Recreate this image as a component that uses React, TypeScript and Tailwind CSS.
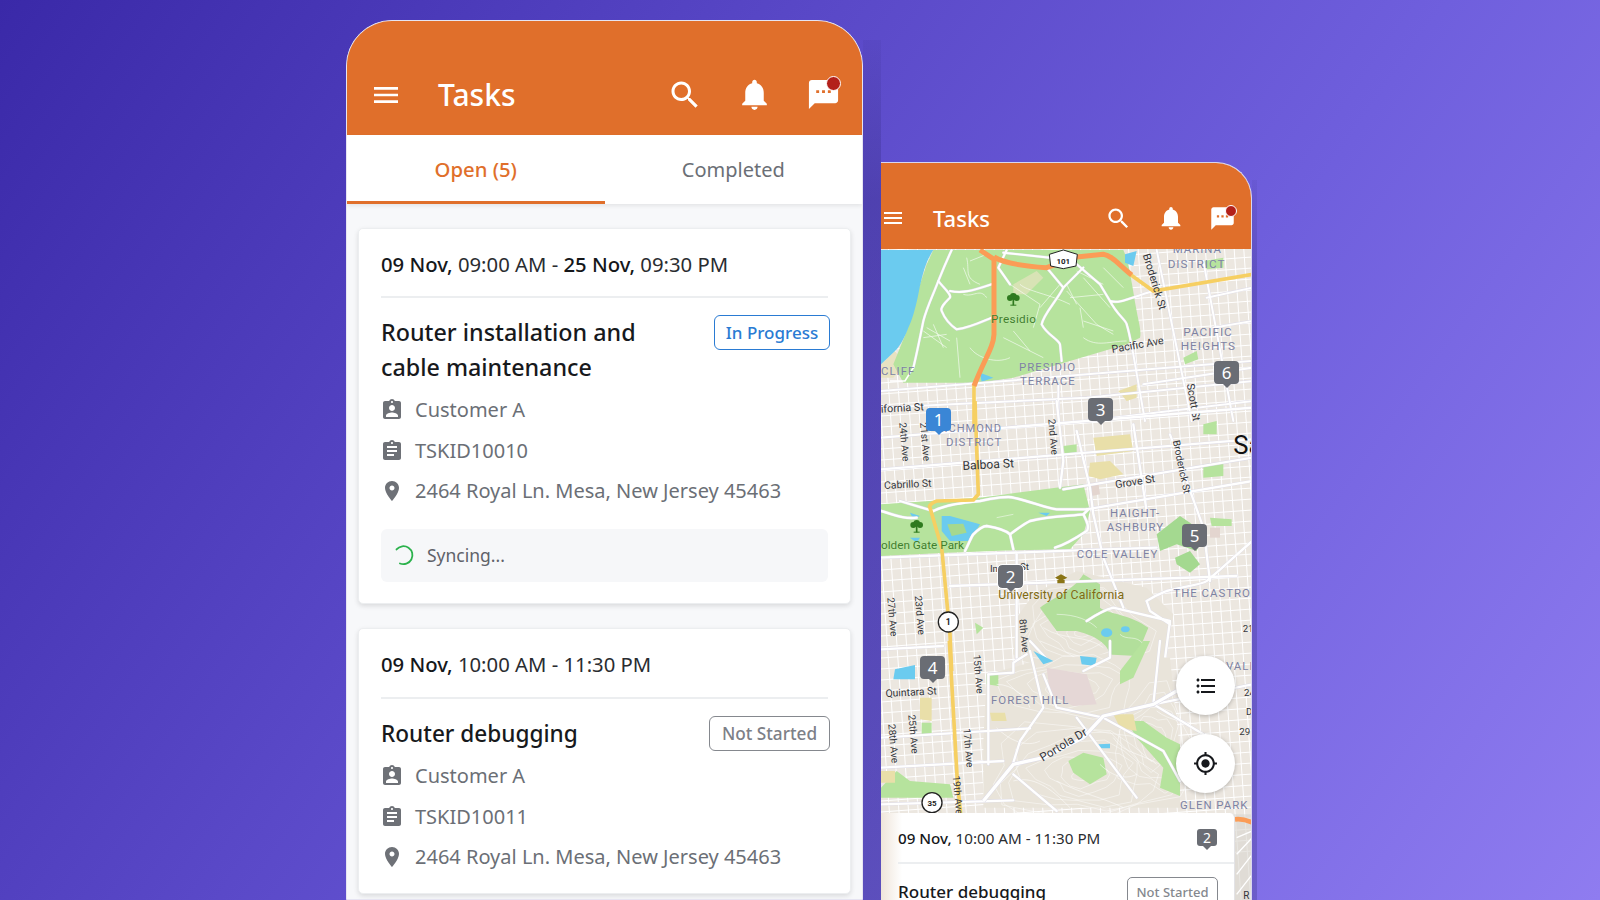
import React from "react";

const P = {
  menu: "M3 18h18v-2H3v2zm0-5h18v-2H3v2zm0-7v2h18V6H3z",
  search: "M15.5 14h-.79l-.28-.27C15.41 12.59 16 11.11 16 9.5 16 5.91 13.09 3 9.5 3S3 5.91 3 9.5 5.91 16 9.5 16c1.61 0 3.09-.59 4.23-1.57l.27.28v.79l5 4.99L20.49 19l-4.99-5zm-6 0C7.01 14 5 11.99 5 9.5S7.01 5 9.5 5 14 7.01 14 9.5 11.99 14 9.5 14z",
  bell: "M12 22c1.1 0 2-.9 2-2h-4c0 1.1.89 2 2 2zm6-6v-5c0-3.07-1.64-5.64-4.5-6.32V4c0-.83-.67-1.5-1.5-1.5s-1.5.67-1.5 1.5v.68C7.63 5.36 6 7.92 6 11v5l-2 2v1h16v-1l-2-2z",
  sms: "M20 2H4c-1.1 0-1.99.9-1.99 2L2 22l4-4h14c1.1 0 2-.9 2-2V4c0-1.1-.9-2-2-2zM9 11H7V9h2v2zm4 0h-2V9h2v2zm4 0h-2V9h2v2z",
  ind: "M19 3h-4.18C14.4 1.84 13.3 1 12 1c-1.3 0-2.4.84-2.82 2H5c-1.1 0-2 .9-2 2v14c0 1.1.9 2 2 2h14c1.1 0 2-.9 2-2V5c0-1.1-.9-2-2-2zm-7 0c.55 0 1 .45 1 1s-.45 1-1 1-1-.45-1-1 .45-1 1-1zm0 4c1.66 0 3 1.34 3 3s-1.34 3-3 3-3-1.34-3-3 1.34-3 3-3zm6 12H6v-1.4c0-2 4-3.1 6-3.1s6 1.1 6 3.1V19z",
  task: "M19 3h-4.18C14.4 1.84 13.3 1 12 1c-1.3 0-2.4.84-2.82 2H5c-1.1 0-2 .9-2 2v14c0 1.1.9 2 2 2h14c1.1 0 2-.9 2-2V5c0-1.1-.9-2-2-2zm-7 0c.55 0 1 .45 1 1s-.45 1-1 1-1-.45-1-1 .45-1 1-1zm2 14H7v-2h7v2zm3-4H7v-2h10v2zm0-4H7V7h10v2z",
  place: "M12 2C8.13 2 5 5.13 5 9c0 5.25 7 13 7 13s7-7.75 7-13c0-3.87-3.13-7-7-7zm0 9.5c-1.38 0-2.5-1.12-2.5-2.5s1.12-2.5 2.5-2.5 2.5 1.12 2.5 2.5-1.12 2.5-2.5 2.5z",
  loc: "M12 8c-2.21 0-4 1.79-4 4s1.79 4 4 4 4-1.79 4-4-1.79-4-4-4zm8.94 3c-.46-4.17-3.77-7.48-7.94-7.94V1h-2v2.06C6.83 3.52 3.52 6.83 3.06 11H1v2h2.06c.46 4.17 3.77 7.48 7.94 7.94V23h2v-2.06c4.17-.46 7.48-3.77 7.94-7.94H23v-2h-2.06zM12 19c-3.87 0-7-3.13-7-7s3.13-7 7-7 7 3.13 7 7-3.13 7-7 7z",
  list: "M4 10.5c-.83 0-1.5.67-1.5 1.5s.67 1.5 1.5 1.5 1.5-.67 1.5-1.5-.67-1.5-1.5-1.5zm0-6c-.83 0-1.5.67-1.5 1.5S3.17 7.5 4 7.5 5.5 6.83 5.5 6 4.83 4.5 4 4.5zm0 12c-.83 0-1.5.68-1.5 1.5s.68 1.5 1.5 1.5 1.5-.68 1.5-1.5-.67-1.5-1.5-1.5zM7 19h14v-2H7v2zm0-6h14v-2H7v2zm0-8v2h14V5H7z",
};

function Ic({ d, size, color }: { d: string; size: number; color: string }) {
  return (
    <svg width={size} height={size} viewBox="0 0 24 24" fill={color} className="shrink-0">
      <path d={d} />
    </svg>
  );
}

function Chat({ size, dot, ring }: { size: number; dot: string; ring: string }) {
  return (
    <div className="relative shrink-0" style={{ width: size, height: size }}>
      <Ic d={P.sms} size={size} color="#fff" />
      <span className={`absolute rounded-full bg-[#b3201a] border-white ${dot} ${ring}`} />
    </div>
  );
}

function Row({ d, text }: { d: string; text: string }) {
  return (
    <div className="flex items-center h-[40.6px]">
      <div className="ml-[-1px]">
        <Ic d={d} size={24} color="#6e7177" />
      </div>
      <span className="ml-[11px] text-[20px] text-[#6b6f76]">{text}</span>
    </div>
  );
}

function Badge({ label, cls }: { label: string; cls: string }) {
  return (
    <span className={`shrink-0 flex items-center justify-center h-[35px] rounded-[6px] border-[1.5px] font-medium ${cls}`}>
      {label}
    </span>
  );
}

type L = [string, number, number, number, number?, string?, number?];
const LB = "#7d82a3";
const DK = "#33353a";

const labels4: L[] = [
  ["MARINA", 908, 306, 32, 0, LB, 3],
  ["DISTRICT", 893, 350, 33, 0, LB, 3],
  ["Presidio", 363, 515, 34, 0, "#3f7f2c", 1],
  ["Pacific Ave", 727, 606, 31, -10, DK, 0],
  ["Broderick St", 818, 312, 31, 73, DK, 0],
  ["PACIFIC", 940, 555, 33, 0, LB, 3],
  ["HEIGHTS", 932, 597, 33, 0, LB, 3],
  ["PRESIDIO", 447, 660, 32, 0, LB, 3],
  ["TERRACE", 450, 703, 32, 0, LB, 3],
  ["CLIFF", 33, 672, 32, 0, LB, 3],
  ["ifornia St", 33, 785, 31, -3, DK, 0],
  ["Scott St", 950, 700, 31, 80, DK, 0],
];
const labels5: L[] = [
  ["RICHMOND", 200, 92, 31, 0, LB, 3],
  ["DISTRICT", 228, 135, 32, 0, LB, 3],
  ["Balboa St", 278, 207, 35, -3, DK, 0],
  ["Cabrillo St", 43, 264, 30, -3, DK, 0],
  ["24th Ave", 88, 65, 29, 85, DK, 0],
  ["21st Ave", 150, 65, 29, 85, DK, 0],
  ["2nd Ave", 535, 55, 29, 85, DK, 0],
  ["Broderick St", 908, 120, 29, 78, DK, 0],
  ["Grove St", 737, 262, 31, -9, DK, 0],
  ["HAIGHT-", 720, 347, 32, 0, LB, 3],
  ["ASHBURY", 710, 390, 32, 0, LB, 3],
  ["COLE VALLEY", 620, 470, 32, 0, LB, 3],
  ["THE CASTRO", 910, 587, 32, 0, LB, 3],
  ["olden Gate Park", 33, 445, 34, 0, "#3f7f2c", 0],
  ["In", 360, 512, 28, 0, DK, 0],
  ["St", 450, 506, 28, 0, DK, 0],
  ["University of California", 385, 595, 35.5, 0, "#7f6a12", 0.3],
  ["27th Ave", 52, 590, 29, 85, DK, 0],
  ["23rd Ave", 134, 585, 29, 85, DK, 0],
  ["8th Ave", 448, 655, 29, 85, DK, 0],
  ["21", 1118, 692, 28, 0, DK, 0],
  ["Sa", 1090, 160, 74, 0, "#111", 0],
];
const labels6: L[] = [
  ["15th Ave", 310, 42, 29, 85, DK, 0],
  ["Quintara St", 47, 168, 30, -3, DK, 0],
  ["FOREST HILL", 363, 190, 32, 0, LB, 3],
  ["25th Ave", 115, 222, 29, 85, DK, 0],
  ["28th Ave", 55, 250, 29, 85, DK, 0],
  ["17th Ave", 280, 263, 29, 85, DK, 0],
  ["19th Ave", 248, 405, 29, 85, DK, 0],
  ["Portola Dr", 518, 362, 34, -31, DK, 0],
  ["GLEN PARK", 930, 503, 32, 0, LB, 3],
  ["VALL", 1068, 88, 32, 0, LB, 3],
  ["24", 1122, 165, 28, 0, DK, 0],
  ["D", 1128, 222, 28, 0, DK, 0],
  ["29", 1108, 282, 28, 0, DK, 0],
];

function Labels({ items }: { items: L[] }) {
  return (
    <>
      {items.map(([t, x, y, fs, r, c, ls]) => (
        <text
          key={t + x}
          x={x}
          y={y}
          fontSize={fs * (c === LB ? 1.07 : 1.04)}
          fill={c || DK}
          letterSpacing={ls || 0}
          transform={r ? `rotate(${r} ${x} ${y})` : undefined}
          fontFamily="Roboto, sans-serif"
          stroke="#ffffff"
          strokeOpacity={0.35}
          strokeWidth={1}
          paintOrder="stroke"
        >
          {t}
        </text>
      ))}
    </>
  );
}

function Roads({ items, w }: { items: string[]; w: number }) {
  return (
    <>
      {items.map((d) => (
        <path key={"c" + d} d={d} fill="none" stroke="#dcdae6" strokeWidth={w + 2} strokeLinejoin="round" strokeLinecap="round" />
      ))}
      {items.map((d) => (
        <path key={d} d={d} fill="none" stroke="#fff" strokeWidth={w} strokeLinejoin="round" strokeLinecap="round" />
      ))}
    </>
  );
}

function Tree({ x, y }: { x: number; y: number }) {
  return (
    <g transform={`translate(${x} ${y})`} fill="#2f7a1f">
      <circle cx="-10" cy="-6" r="9" />
      <circle cx="10" cy="-6" r="9" />
      <circle cx="0" cy="-11" r="10" />
      <rect x="-2.5" y="-6" width="5" height="22" />
      <rect x="-9" y="14" width="18" height="3" />
    </g>
  );
}

function Shield({ x, y, t, fs }: { x: number; y: number; t: string; fs: number }) {
  return (
    <g>
      <circle cx={x} cy={y} r="30" fill="#fff" stroke="#222" strokeWidth="4" />
      <text x={x} y={y + 9} textAnchor="middle" fontSize={fs} fontWeight="700" fill="#222" fontFamily="Roboto, sans-serif">
        {t}
      </text>
    </g>
  );
}

function Contours({ cx, cy, rx, ry, n }: { cx: number; cy: number; rx: number; ry: number; n: number }) {
  const rings: string[] = [];
  for (let k = 1; k <= n; k++) {
    const f = k / n;
    const pts: string[] = [];
    for (let a = 0; a < 360; a += 24) {
      const t = (a * Math.PI) / 180;
      const wob = 1 + 0.14 * Math.sin(3 * t + k) + 0.08 * Math.cos(5 * t - k);
      pts.push(`${(cx + rx * f * wob * Math.cos(t)).toFixed(1)} ${(cy + ry * f * wob * Math.sin(t)).toFixed(1)}`);
    }
    rings.push("M" + pts.join("L") + "Z");
  }
  return (
    <g fill="none" stroke="#fff" strokeWidth="2" opacity=".7" strokeLinejoin="round">
      {rings.map((d) => (
        <path key={d} d={d} />
      ))}
    </g>
  );
}

const GREEN = "#b6e39d";
const BLUE = "#6bcbef";
const TAN = "#e9dfa9";

function MapArt() {
  const hs: number[] = [];
  for (let y = 250; y < 880; y += 11) hs.push(y);
  const vs: number[] = [];
  for (let x = 840; x < 1270; x += 9.6) vs.push(x);
  return (
    <svg viewBox="881 248 371 652" width={371} height={652} className="block">
      <rect x="881" y="248" width="371" height="652" fill="#ece7e0" />
      <g stroke="#ffffff" strokeWidth="1">
        {hs.map((y) => (
          <line key={y} x1="881" y1={y} x2="1252" y2={y - 27} />
        ))}
        {vs.map((x) => (
          <line key={x} x1={x} y1="240" x2={x + 46} y2="900" />
        ))}
      </g>

      {/* crop 4 region */}
      <g transform="translate(870 150) scale(.33333)">
        <path d="M33 640L75 600L105 640L70 680L33 680Z" fill="#e8e2c2" />
        <path d="M190 297H760C780 340 785 400 800 480C805 510 815 540 810 560L770 580L600 630L430 680L330 695H100L70 640L110 540L140 430L170 340Z" fill={GREEN} />
        <path d="M33 297H190C175 320 160 350 145 430C135 480 125 510 115 530C100 570 85 590 75 600L33 640Z" fill={BLUE} />
        <path d="M330 665L370 680L335 692Z" fill={BLUE} />
        <path d="M765 310L800 300L790 345L765 335Z" fill={BLUE} />
        <path d="M430 400L500 360L520 380L470 430L430 430Z" fill="#d8e3b5" />
        <path d="M940 620L980 600L985 625L945 640ZM1000 820L1040 810L1040 850L1000 850ZM1000 330L1060 320L1060 350L1010 355Z" fill={GREEN} />
        <path d="M745 720L800 700L800 740L770 750Z" fill={TAN} />
        <g fill="none" stroke="#fff" strokeWidth="2" opacity=".9">
          <path d="M290 320C300 360 280 380 330 400M420 400L510 460L490 530M590 420L680 520L730 550M160 540L230 590M260 560L270 680M450 400C470 420 540 430 600 460M630 470L640 530M280 430C310 440 330 410 350 440M620 360L700 400M700 350L760 410" />
          <path d="M170 530L240 570M190 520L220 590M160 560L230 550M590 400L620 460M640 380L720 470M600 440L700 430M510 470L570 400M400 560L520 620M430 540L480 600M640 510L730 540M300 330L350 310M280 350L300 400" />
          <path d="M300 590C320 620 380 640 420 620M640 560C680 590 720 570 770 570" />
        </g>
        <Roads
          w={6}
          items={[
            "M245 297C225 340 215 365 205 390C190 430 170 470 160 510C150 560 140 610 130 650",
            "M205 390C220 410 245 430 240 440C225 455 210 470 215 480C225 505 245 525 260 535C300 530 340 510 365 500",
            "M240 420C290 430 330 410 365 400",
            "M410 297L385 350L420 400",
            "M400 305L540 320",
            "M530 350L580 410L640 350",
            "M620 340L690 400L720 450C740 490 770 510 770 520C780 550 785 590 790 610L825 810",
            "M580 410C560 450 520 490 515 520C530 550 565 565 570 580L575 630",
            "M720 450C750 460 780 440 850 420",
            "M33 720L1147 630",
            "M33 770L650 740L1147 690",
            "M860 297L965 810",
            "M1000 330L1090 810",
            "M565 700V810",
            "M820 700L1147 650",
            "M650 810L1147 750",
            "M1010 440L1147 410",
            "M1030 530L1147 510",
          ]}
        />
        <path d="M130 650L105 690H60" fill="none" stroke="#fff" strokeWidth="5" />
        <path d="M780 370L850 420L1147 370" fill="none" stroke="#f6cf62" strokeWidth="11" />
        <path d="M312 700V820" fill="none" stroke="#f6cf62" strokeWidth="11" />
        <path d="M330 297L372 325L372 550C370 590 345 620 312 705" fill="none" stroke="#fb9c56" strokeWidth="15" strokeLinejoin="round" />
        <path d="M372 318C400 335 450 345 530 350L620 318L700 310C730 315 750 345 785 372" fill="none" stroke="#fb9c56" strokeWidth="15" strokeLinejoin="round" />
        <path d="M538 310L580 297L622 310L618 345L580 353L542 345Z" fill="#fff" stroke="#222" strokeWidth="3" />
        <text x="580" y="338" textAnchor="middle" fontSize="24" fontWeight="700" fill="#222" fontFamily="Roboto, sans-serif">101</text>
        <Tree x={430} y={447} />
        <Labels items={labels4} />
      </g>

      {/* crop 5 region */}
      <g transform="translate(870 400) scale(.33333)">
        <path d="M33 310L180 300L330 290L440 275L640 250L660 330L640 400L600 445L430 448L230 455L33 465Z" fill={GREEN} />
        <path d="M215 345L240 345L330 370L300 420L240 420L215 390Z" fill={BLUE} />
        <path d="M232 370L280 368L290 395L245 405Z" fill="#a6d88e" />
        <path d="M120 335L150 345L130 355ZM120 410L150 410L140 425Z M505 335L540 335L530 345Z" fill={BLUE} />
        <path d="M660 185L720 180L760 220L690 235L655 225ZM670 110L780 100L790 150L680 165Z" fill={TAN} />
        <path d="M1000 190L1060 185L1060 225L1000 230ZM580 135L620 130L620 160L585 165ZM1020 350L1085 355L1085 375L1025 375Z" fill={GREEN} />
        <path d="M660 245L685 245L690 280L665 285Z" fill="#e3d5cf" />
        <path d="M1020 380L1050 380L1050 410L1020 410Z" fill="#e3d5cf" />
        <path d="M860 400L930 345L960 365L1000 400L980 450L920 430L870 450Z" fill="#a4d990" />
        {/* Hills */}
        <path d="M490 580L620 510L830 560L910 640L880 810H500L430 760L440 650Z" fill="#e9e4da" />
        <Contours cx={640} cy={690} rx={190} ry={130} n={7} />
        <path d="M510 620C550 590 610 570 640 520L690 550L690 620C720 640 780 640 835 680L790 790L720 760C710 720 660 700 620 690L560 690Z" fill="#b2df9b" />
        <path d="M915 470L960 450L990 490L960 515L920 490Z" fill="#a4d990" />
        <path d="M315 665L340 680L320 700Z" fill={GREEN} />
        <ellipse cx="710" cy="695" rx="17" ry="13" fill={BLUE} />
        <ellipse cx="766" cy="685" rx="13" ry="9" fill={BLUE} />
        <g fill="none" stroke="#fff" strokeWidth="2" opacity=".75">
          <path d="M520 680C580 720 650 700 700 740M510 720C560 740 610 760 640 790M560 640C620 640 660 660 680 680M380 350L430 340M820 730C800 700 770 720 750 700" />
        </g>
        <Roads
          w={7}
          items={[
            "M90 300L190 330",
            "M190 330C230 310 280 305 330 300C370 290 420 285 430 290C480 300 520 320 560 325L650 325",
            "M33 330C70 340 100 355 140 350",
            "M285 450C300 420 305 405 310 400C330 380 340 375 350 375C380 380 410 390 420 400L430 445",
            "M420 400C440 385 460 370 480 360C540 345 600 345 640 340L655 325",
            "M640 340C650 360 660 380 650 390C620 410 590 430 555 440",
            "M33 470L620 448L860 440",
            "M650 325L1147 240",
            "M830 600C860 580 880 575 890 570C950 555 1000 550 1010 540C1060 500 1100 460 1147 420",
            "M650 660C680 640 710 625 730 620L900 660L880 810",
            "M830 600L840 630L900 670",
            "M33 110L1147 20",
            "M33 205L1147 115",
            "M560 0L580 180L570 260",
            "M620 90L660 260L670 340L700 470L760 620",
            "M790 70L830 330",
            "M900 100L1000 380L1020 540",
            "M240 555L1100 525",
            "M440 460L440 770",
            "M480 720L545 790",
            "M33 745L220 735",
            "M580 265L1147 170",
          ]}
        />
        <path d="M315 0L325 280L310 297L200 300C185 305 175 315 180 320L215 440L240 700L245 810" fill="none" stroke="#f6cf62" strokeWidth="11" strokeLinejoin="round" />
        <Shield x={235} y={663} t="1" fs={26} />
        <Tree x={140} y={378} />
        <path d="M573 520L592 530L573 540L555 530Z M562 537H584V547H562Z" fill="#8a7415" />
        <Labels items={labels5} />
      </g>

      {/* crop 6 region */}
      <g transform="translate(870 640) scale(.33333)">
        <path d="M350 100L500 60L700 40L900 50L930 330L930 500H340L340 300Z" fill="#e9e4da" />
        <Contours cx={640} cy={400} rx={290} ry={150} n={8} />
        <Contours cx={600} cy={140} rx={200} ry={90} n={5} />
        <Contours cx={850} cy={300} rx={110} ry={160} n={6} />
        <path d="M70 115L75 85L135 72L135 115Z" fill={BLUE} />
        <path d="M530 80L650 100L680 190L610 195L540 160Z" fill="#e5d7d6" />
        <path d="M630 45L680 50L675 75L635 70ZM490 30L550 60L520 70Z" fill={BLUE} />
        <path d="M685 310L720 308L720 322L685 322Z" fill={BLUE} />
        <path d="M770 240L820 240L890 290L930 310L930 465L870 440L880 380L800 290Z" fill={GREEN} />
        <path d="M595 360L640 335L700 350L710 400L660 430L610 395Z" fill={GREEN} />
        <path d="M33 440L80 390L120 420L240 430L250 470L33 470Z" fill={GREEN} />
        <path d="M750 90L820 0L840 0L790 110L750 130Z" fill={GREEN} />
        <path d="M350 100L385 100L385 135L350 130ZM155 245L185 245L185 280L155 280Z" fill={GREEN} />
        <path d="M150 170L185 170L185 240L150 235ZM360 215L405 215L410 240L365 240ZM730 220L790 220L800 270L750 260ZM33 390L75 390L75 425L33 425Z" fill={TAN} />
        <g fill="none" stroke="#fff" strokeWidth="2" opacity=".8">
          <path d="M430 420C500 400 560 460 600 500M560 420C640 460 700 470 760 500M800 400C760 420 720 400 690 370M380 260C420 300 470 320 510 300M730 290C760 340 830 340 860 370M860 210C900 240 940 240 980 250M380 130C430 130 470 170 480 200" />
        </g>
        <Roads
          w={7}
          items={[
            "M33 290L480 262",
            "M33 380L400 360",
            "M355 100V370",
            "M355 100L430 95V65L470 40",
            "M480 30L520 200L450 300L430 365",
            "M520 100L560 200L700 230",
            "M620 230L800 470",
            "M430 400L560 510",
            "M33 490L430 478",
            "M720 0V50L640 90",
            "M870 0L850 190",
            "M700 230L880 330L930 420",
            "M850 190L1000 280",
            "M850 190L1147 130",
          ]}
        />
        <path d="M340 480L430 370L520 350L640 290L700 225L850 190L920 150" fill="none" stroke="#dcdae6" strokeWidth="13" strokeLinejoin="round" />
        <path d="M340 480L430 370L520 350L640 290L700 225L850 190L920 150" fill="none" stroke="#fff" strokeWidth="10" strokeLinejoin="round" />
        <path d="M238 0L262 420L272 520" fill="none" stroke="#f6cf62" strokeWidth="11" />
        <path d="M1090 520H1147V780H1090Z" fill="#d8d5cf" opacity=".6" />
        <path d="M1095 535Q1120 532 1147 545" fill="none" stroke="#fb9c56" strokeWidth="14" />
        <g fill="none" stroke="#fff" strokeWidth="4">
          <path d="M1100 590L1147 570M1100 640L1147 590M1100 700L1147 640M1100 760L1147 700" />
        </g>
        <Shield x={186} y={485} t="35" fs={24} />
        <text x="1120" y="775" fontSize="30" fill="#33353a" fontFamily="Roboto, sans-serif">R</text>
        <Labels items={labels6} />
      </g>
    </svg>
  );
}

function Pin({ n, blue, ring, pos, small }: { n: string; blue?: boolean; ring?: boolean; pos: string; small?: boolean }) {
  const c = blue ? "bg-[#3a86d6]" : "bg-[#6a6d74]";
  const tip = blue ? "border-t-[#3a86d6]" : "border-t-[#6a6d74]";
  return (
    <div className={`${pos} ${small ? "w-[20px] h-[17px] text-[14px] rounded-[3px]" : "w-[25px] h-[23px] text-[17px] rounded-[4px]"} ${c} ${ring ? "outline outline-1 outline-white" : ""} flex items-center justify-center text-white font-['Noto_Sans',sans-serif] leading-none`}>
      {n}
      <span className={`absolute left-1/2 -translate-x-1/2 top-full w-0 h-0 border-x-[4px] border-x-transparent border-t-[4px] ${tip}`} />
    </div>
  );
}

function Fab({ d, pos, size }: { d: string; pos: string; size: number }) {
  return (
    <div className={`${pos} w-[59px] h-[59px] rounded-full bg-white shadow-[0_1px_4px_rgba(0,0,0,0.25)] flex items-center justify-center`}>
      <Ic d={d} size={size} color="#16181c" />
    </div>
  );
}

export default function App() {
  return (
    <div className="w-[1600px] h-[900px] overflow-hidden flex items-start pl-[346px] bg-[linear-gradient(125deg,#3a29a8_0%,#5a49c8_38%,#6f5fdd_65%,#8f7cf0_100%)] font-['Noto_Sans',sans-serif]">
      {/* Phone 1 */}
      <div className="w-[517px] h-[880px] mt-[20px] shrink-0 rounded-t-[46px] overflow-hidden border border-[#e6e4f2] bg-[#f7f8fa] flex flex-col">
        <header className="h-[114px] shrink-0 bg-[#e06f2b] flex items-center pt-[33px] pl-[23px] pr-[21px] text-white">
          <Ic d={P.menu} size={32} color="#fff" />
          <h1 className="ml-[36px] text-[30px] leading-none font-medium">Tasks</h1>
          <div className="ml-auto flex items-center">
            <Ic d={P.search} size={36} color="#fff" />
            <div className="ml-[33px]"><Ic d={P.bell} size={37} color="#fff" /></div>
            <div className="ml-[33px]"><Chat size={35} dot="left-[20px] top-[-1px] w-[15px] h-[15px]" ring="border-[1.5px]" /></div>
          </div>
        </header>
        <nav className="h-[69px] shrink-0 bg-white flex shadow-[0_2px_4px_rgba(0,0,0,0.08)]">
          <div className="w-1/2 flex items-center justify-center pt-[2px] border-b-[3px] border-[#e06f2b] text-[#e06f2b] text-[20.3px] font-medium">Open (5)</div>
          <div className="w-1/2 flex items-center justify-center pt-[1px] text-[20px] text-[#6b6f76]">Completed</div>
        </nav>
        <main className="flex flex-col gap-[24px] px-[11px] pt-[24px]">
          <article className="h-[376px] shrink-0 rounded-[5px] bg-white border border-[#eceef0] shadow-[0_2px_5px_rgba(0,0,0,0.12)] px-[22px]">
            <p className="h-[69px] flex items-center pt-[3px] border-b-2 border-[#eceef0] text-[20.3px] text-[#2a2c30]">
              <b className="font-medium text-[#15171a]">09 Nov,&nbsp;</b>09:00 AM -&nbsp;<b className="font-medium text-[#15171a]">25 Nov,&nbsp;</b>09:30 PM
            </p>
            <div className="flex justify-between mt-[17px]">
              <h2 className="text-[23.3px] leading-[35px] font-medium text-[#17191c] w-[290px]">Router installation and cable maintenance</h2>
              <Badge label="In Progress" cls="w-[116px] mr-[-2px] text-[17px] border-[#2a7bd3] text-[#2a7bd3]" />
            </div>
            <div className="mt-[5px]">
              <Row d={P.ind} text="Customer A" />
              <Row d={P.task} text="TSKID10010" />
              <Row d={P.place} text="2464 Royal Ln. Mesa, New Jersey 45463" />
            </div>
            <div className="mt-[17px] h-[53px] rounded-[6px] bg-[#f6f7f9] flex items-center pl-[11px] text-[17.5px] text-[#5f6269]">
              <svg width="22" height="22" viewBox="0 0 22 22" fill="none">
                <path d="M3 8A9 9 0 1 1 11 20" stroke="#2bb24c" strokeWidth="1.8" strokeLinecap="round" transform="rotate(20 11 11)" />
              </svg>
              <span className="ml-[13px]">Syncing...</span>
            </div>
          </article>
          <article className="h-[266px] shrink-0 rounded-[5px] bg-white border border-[#eceef0] shadow-[0_2px_5px_rgba(0,0,0,0.12)] px-[22px]">
            <p className="h-[70px] flex items-center pt-[2px] border-b-2 border-[#eceef0] text-[20.3px] text-[#2a2c30]">
              <b className="font-medium text-[#15171a]">09 Nov,&nbsp;</b>10:00 AM - 11:30 PM
            </p>
            <div className="flex justify-between items-center mt-[17px]">
              <h2 className="text-[22.6px] leading-[35px] font-medium text-[#17191c]">Router debugging</h2>
              <Badge label="Not Started" cls="w-[121px] mr-[-2px] text-[17.2px] border-[#85888e] text-[#7d8087]" />
            </div>
            <div className="mt-[5px]">
              <Row d={P.ind} text="Customer A" />
              <Row d={P.task} text="TSKID10011" />
              <Row d={P.place} text="2464 Royal Ln. Mesa, New Jersey 45463" />
            </div>
          </article>
        </main>
      </div>

      {/* Shadow of phone 1 */}
      <div className="w-[18px] h-[860px] mt-[40px] shrink-0 bg-[linear-gradient(180deg,rgba(25,20,80,0.05),rgba(25,20,80,0.24)_160px)]" />

      {/* Phone 2 */}
      <div className="w-[371px] h-[738px] mt-[162px] shrink-0 rounded-tr-[36px] overflow-hidden bg-white flex flex-col border-t border-r border-[#d9d6f0]">
        <header className="h-[86px] shrink-0 bg-[#e06f2b] flex items-center pt-[24px] pr-[15px] text-white">
          <Ic d={P.menu} size={24} color="#fff" />
          <h1 className="ml-[28px] text-[22px] leading-none font-medium">Tasks</h1>
          <div className="ml-auto flex items-center">
            <Ic d={P.search} size={27} color="#fff" />
            <div className="ml-[25px]"><Ic d={P.bell} size={28} color="#fff" /></div>
            <div className="ml-[24px]"><Chat size={27} dot="left-[16px] top-[0px] w-[12px] h-[12px]" ring="border" /></div>
          </div>
        </header>
        <div className="relative flex-1 overflow-hidden">
          <MapArt />
          <Pin n="6" pos="absolute left-[333px] top-[112px]" />
          <Pin n="3" pos="absolute left-[207px] top-[149px]" />
          <Pin n="1" blue pos="absolute left-[45px] top-[159px]" />
          <Pin n="2" ring pos="absolute left-[117px] top-[316px]" />
          <Pin n="5" pos="absolute left-[301px] top-[275px]" />
          <Pin n="4" pos="absolute left-[39px] top-[407px]" />
          <Fab d={P.list} size={24} pos="absolute left-[295px] top-[407px]" />
          <Fab d={P.loc} size={25} pos="absolute left-[295px] top-[485px]" />
          <div className="absolute left-0 top-[564px] w-[354px] h-[100px] rounded-tr-[5px] bg-[linear-gradient(90deg,#efe5da,#ffffff_6%)] border-r border-[#e3e3e6] pl-[17px]">
            <div className="h-[51px] flex items-center pt-[2px] border-b-2 border-[#eceef0] text-[15.2px] text-[#2a2c30] relative">
              <b className="font-medium text-[#15171a]">09 Nov,&nbsp;</b>10:00 AM - 11:30 PM
              <Pin n="2" small pos="absolute left-[299px] top-[16px]" />
            </div>
            <div className="flex items-center justify-between pr-[17px] mt-[13px]">
              <h2 className="text-[17px] leading-none font-medium text-[#17191c] mb-[4px]">Router debugging</h2>
              <span className="w-[91px] h-[32px] mr-[-1px] rounded-[5px] border-[1.5px] border-[#85888e] text-[#85888e] text-[13px] font-medium flex items-center justify-center">Not Started</span>
            </div>
          </div>
        </div>
      </div>

      {/* Shadow of phone 2 */}
      <div className="w-[5px] h-[720px] mt-[180px] shrink-0 bg-[linear-gradient(180deg,rgba(25,20,80,0.05),rgba(25,20,80,0.2)_100px)]" />
    </div>
  );
}
